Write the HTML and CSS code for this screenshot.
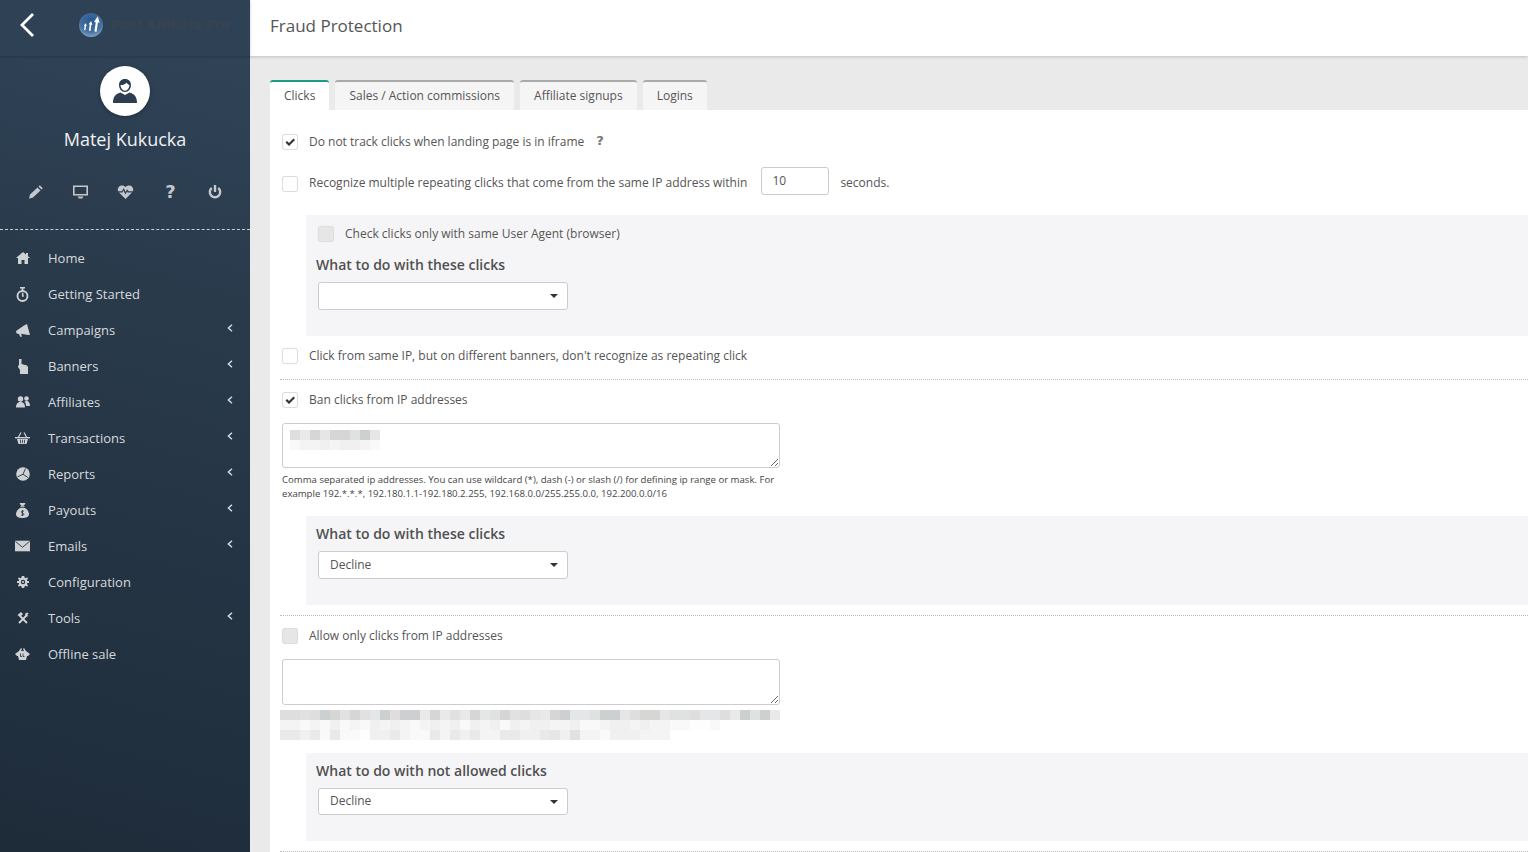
FILE: index.html
```html
<!DOCTYPE html>
<html lang="en">
<head>
<meta charset="utf-8">
<title>Fraud Protection</title>
<link rel="stylesheet" href="styles.css">
</head>
<body>
<div class="app">
  <aside class="sidebar">
    <div class="brand">
      <svg class="back" width="14" height="24" viewBox="0 0 14 24"><polyline points="13,1 2,12 13,23" fill="none" stroke="#fff" stroke-width="2.8"/></svg>
      <svg class="logo" width="24" height="24" viewBox="0 0 24 24">
        <defs><radialGradient id="lg" cx="0.5" cy="0.3" r="0.8"><stop offset="0" stop-color="#2c5a90"/><stop offset="0.6" stop-color="#44719f"/><stop offset="1" stop-color="#9ab8d2"/></radialGradient></defs>
        <circle cx="12" cy="12" r="12" fill="url(#lg)"/>
        <path transform="rotate(8 12 12)" d="M17.500 2.500l2.700 6h-1.700V18h-2.200V8.500H14.600zM11.500 8l1.800 3.600h-1V18h-1.600v-6.400h-1zM6.500 11l1.500 2.600h-.8V18H5.800v-4.400H5z" fill="#fff"/>
      </svg>
      <span class="brand-name">Post Affiliate Pro</span>
    </div>
    <div class="profile">
      <div class="avatar">
        <svg width="26" height="26" viewBox="0 0 26 26"><path d="M13 1c-3.800 0-6 2.600-6 6 0 3.700 2.500 7 6 7s6-3.300 6-7c0-3.400-2.200-6-6-6zm-4.500 6c2 .2 4.500-.6 6-2.300 1 1.300 2 2 3 2.300-.2 2.700-1.800 5.700-4.500 5.700S8.600 9.700 8.500 7zM8.500 14.500C5 15.800 1 17 1 25h24c0-8-4-9.200-7.500-10.500L13 17z" fill="#2c3e50"/></svg>
      </div>
      <div class="name">Matej Kukucka</div>
      <div class="quick">
        <svg width="16" height="16" viewBox="0 0 16 16"><path d="M10.500 3.500l3 3-7.500 7-4 1.200 1-4.200zM11.500 2.500l1.300-1.300 3 3-1.300 1.300z" fill="currentColor"/></svg>
        <svg width="17" height="16" viewBox="0 0 17 16"><path d="M1 1.500h15v10H1zm1.600 1.600v6.800h11.800V3.100zM5.500 12.500h6l-1.500 2H7z" fill="currentColor" fill-rule="evenodd"/></svg>
        <svg width="17" height="16" viewBox="0 0 17 16"><path d="M8.500 15L2 8.500h3.500l1-2 2 4 1.500-3 .7 1H15zM1.200 7.300C-.6 3.500 3.800-.6 8.500 3c4.700-3.600 9.100.5 7.300 4.300h-4.200l-1.500-2-1.400 2.800-2-4-1.700 3.200z" fill="currentColor"/></svg>
        <span class="q">?</span>
        <svg width="16" height="16" viewBox="0 0 16 16"><path d="M6.800 1h2.400v7H6.800z" fill="currentColor"/><path d="M4.800 4A5.200 5.200 0 1 0 11.200 4" fill="none" stroke="currentColor" stroke-width="2.400"/></svg>
      </div>
    </div>
    <nav class="menu">
      <a class="item"><span class="ico"><svg width="14" height="12" viewBox="0 0 14 12"><path d="M7 0l3 2.600V1h2v3.300L14 6h-2v6H8.500V8h-3v4H2V6H0z" fill="currentColor"/></svg></span><span class="txt">Home</span></a>
      <a class="item"><span class="ico"><svg width="13" height="15" viewBox="0 0 13 15"><path d="M4 0h5v1.500H7.400v2H5.600v-2H4z" fill="currentColor"/><circle cx="6.500" cy="9" r="5" fill="none" stroke="currentColor" stroke-width="1.900"/><path d="M5.800 5.800h1.400l.7 3.900H6z" fill="currentColor"/></svg></span><span class="txt">Getting Started</span></a>
      <a class="item"><span class="ico"><svg width="14" height="13" viewBox="0 0 14 13"><path d="M0 7l8-5.500L11 0l3 11-3.500-.2L5 9.800l1 3H4.200L3 10 .6 9.600z" fill="currentColor"/></svg></span><span class="txt">Campaigns</span><svg class="chev" width="6" height="8" viewBox="0 0 6 8"><polyline points="5,.7 1.400,4 5,7.300" fill="none" stroke="currentColor" stroke-width="1.500"/></svg></a>
      <a class="item"><span class="ico"><svg width="11" height="15" viewBox="0 0 11 15"><path d="M2 0h2.500v5L10 6.500 11 8v7H3v-4L1 8V6l1 1z" fill="currentColor"/></svg></span><span class="txt">Banners</span><svg class="chev" width="6" height="8" viewBox="0 0 6 8"><polyline points="5,.7 1.400,4 5,7.300" fill="none" stroke="currentColor" stroke-width="1.500"/></svg></a>
      <a class="item"><span class="ico"><svg width="14" height="12" viewBox="0 0 14 12"><circle cx="4.500" cy="3" r="2.700" fill="currentColor"/><circle cx="10.500" cy="2.500" r="2.300" fill="currentColor"/><path d="M0 11.500c0-4 2-5.500 4.500-5.500S9 7.500 9 11.500zM10 10c0-2-.5-3.300-1.500-4.300C9 5.300 9.700 5 10.500 5 13 5 14 7 14 10z" fill="currentColor"/></svg></span><span class="txt">Affiliates</span><svg class="chev" width="6" height="8" viewBox="0 0 6 8"><polyline points="5,.7 1.400,4 5,7.300" fill="none" stroke="currentColor" stroke-width="1.500"/></svg></a>
      <a class="item"><span class="ico"><svg width="15" height="12" viewBox="0 0 15 12"><path d="M0 5h15v1.400H0z" fill="currentColor"/><path d="M2 7h11l-1.500 5h-8zM5 7.800v3.400h.8V7.800zM7.100 7.800v3.400h.8V7.800zM9.200 7.800v3.400h.8V7.800z" fill="currentColor" fill-rule="evenodd"/><path d="M3.500 5L6 .5M11.500 5L9 .5" stroke="currentColor" stroke-width="1.200" fill="none"/></svg></span><span class="txt">Transactions</span><svg class="chev" width="6" height="8" viewBox="0 0 6 8"><polyline points="5,.7 1.400,4 5,7.300" fill="none" stroke="currentColor" stroke-width="1.500"/></svg></a>
      <a class="item"><span class="ico"><svg width="14" height="14" viewBox="0 0 14 14"><circle cx="7" cy="7" r="6.800" fill="currentColor"/><path d="M9.500 1.500L7 7.300M7 7.300L1.500 9.800M7 7.300l5 3.200" stroke="#25343f" stroke-width=".9" fill="none"/></svg></span><span class="txt">Reports</span><svg class="chev" width="6" height="8" viewBox="0 0 6 8"><polyline points="5,.7 1.400,4 5,7.300" fill="none" stroke="currentColor" stroke-width="1.500"/></svg></a>
      <a class="item"><span class="ico"><svg width="13" height="15" viewBox="0 0 13 15"><path d="M3.500 0h6L8 2.700H5zM4.500 3.200h4v1h-4zM4 5h5c2.500 1.500 4 4 4 6 0 3-3 4-6.500 4S0 14 0 11c0-2 1.500-4.500 4-6z" fill="currentColor"/><path d="M8 8.300C7 7.700 5.200 7.800 5.200 9s2.800 1 2.800 2.200-1.800 1.300-3 .7M6.500 7v6" stroke="#25343f" stroke-width=".8" fill="none"/></svg></span><span class="txt">Payouts</span><svg class="chev" width="6" height="8" viewBox="0 0 6 8"><polyline points="5,.7 1.400,4 5,7.300" fill="none" stroke="currentColor" stroke-width="1.500"/></svg></a>
      <a class="item"><span class="ico"><svg width="17" height="12" viewBox="0 0 17 12"><rect width="17" height="12" fill="currentColor"/><polyline points=".5,.8 8.500,7.500 16.500,.8" fill="none" stroke="#25343f" stroke-width="1"/></svg></span><span class="txt">Emails</span><svg class="chev" width="6" height="8" viewBox="0 0 6 8"><polyline points="5,.7 1.400,4 5,7.300" fill="none" stroke="currentColor" stroke-width="1.500"/></svg></a>
      <a class="item"><span class="ico"><svg width="12" height="12" viewBox="0 0 12 12"><path d="M4.800 0h2.400l.3 1.600 1.300.6L10.200 1.300 11 2.800 9.900 4l.2 1H12v2h-1.900l-.2 1 1.100 1.200-.8 1.500-1.400-.9-1.300.6L7.200 12H4.800l-.3-1.600-1.300-.6-1.400.9-.8-1.500L2.100 8l-.2-1H0V5h1.900l.2-1L1 2.800l.8-1.500 1.400.9 1.300-.6zM6 3.800a2.200 2.200 0 1 0 0 4.400 2.200 2.200 0 0 0 0-4.400z" fill="currentColor" fill-rule="evenodd"/><circle cx="6" cy="6" r="1.100" fill="currentColor"/></svg></span><span class="txt">Configuration</span></a>
      <a class="item"><span class="ico"><svg width="12" height="12" viewBox="0 0 12 12"><path d="M2 11L10 3M10 11L3 4" stroke="currentColor" stroke-width="1.900" fill="none"/><path d="M.5 3L4 0l2 2-3 3zM8 2a2.500 2.500 0 0 1 3.800-.8L10 3l1.500 1a2.500 2.500 0 0 1-3.500-2z" fill="currentColor"/></svg></span><span class="txt">Tools</span><svg class="chev" width="6" height="8" viewBox="0 0 6 8"><polyline points="5,.7 1.400,4 5,7.300" fill="none" stroke="currentColor" stroke-width="1.500"/></svg></a>
      <a class="item"><span class="ico"><svg width="15" height="12" viewBox="0 0 15 12"><path d="M0 6l4-3L6 0l1 1-1 2h3L8 1l1-1 2 3 4 3-2 2h-1l-1 4H4L3 8H2z" fill="currentColor"/><path d="M5.500 5.500v3h1.500M8 5.500v3h1.500" stroke="#25343f" stroke-width=".8" fill="none"/></svg></span><span class="txt">Offline sale</span></a>
    </nav>
  </aside>

  <div class="main">
    <header class="topbar"><h1 class="title">Fraud Protection</h1></header>
    <div class="content">
      <div class="tabs">
        <a class="tab active">Clicks</a>
        <a class="tab">Sales / Action commissions</a>
        <a class="tab">Affiliate signups</a>
        <a class="tab">Logins</a>
      </div>
      <section class="panel">
        <div class="check-row first">
          <span class="cb"><svg width="10" height="9" viewBox="0 0 10 9"><path d="M.5 4.500L2 3l2 2L8.500.5 10 2 4 8z" fill="#333"/></svg></span>
          <span class="lbl">Do not track clicks when landing page is in iframe</span>
          <span class="help">?</span>
        </div>
        <div class="check-row repeat">
          <span class="cb nudge"></span>
          <span class="lbl nudge-t">Recognize multiple repeating clicks that come from the same IP address within</span>
          <input class="num" type="text" value="10">
          <span class="lbl nudge-t">seconds.</span>
        </div>
        <div class="box box-a">
          <div class="check-row inner">
            <span class="cb off"></span>
            <span class="lbl">Check clicks only with same User Agent (browser)</span>
          </div>
          <h3 class="sub">What to do with these clicks</h3>
          <div class="select"><span class="val"></span><i class="caret"></i></div>
        </div>
        <div class="check-row gap12">
          <span class="cb"></span>
          <span class="lbl">Click from same IP, but on different banners, don't recognize as repeating click</span>
        </div>
        <hr class="rule r1">
        <div class="check-row gap12">
          <span class="cb"><svg width="10" height="9" viewBox="0 0 10 9"><path d="M.5 4.500L2 3l2 2L8.500.5 10 2 4 8z" fill="#333"/></svg></span>
          <span class="lbl">Ban clicks from IP addresses</span>
        </div>
        <div class="ta-wrap">
          <textarea class="ta"></textarea>
          <div class="smudge">
            <div class="px-row"><i class="t3"></i><i class="t6"></i><i class="t2"></i><i class="t5"></i><i class="t2"></i><i class="t2"></i><i class="t4"></i><i class="t1"></i><i class="t5"></i></div>
            <div class="px-row"><i class="t9"></i><i class="t8"></i><i class="t8"></i><i class="t7"></i><i class="t8"></i><i class="t7"></i><i class="t7"></i><i class="t8"></i><i class="t9"></i></div>
          </div>
        </div>
        <p class="hint">Comma separated ip addresses. You can use wildcard (*), dash (-) or slash (/) for defining ip range or mask. For example 192.*.*.*, 192.180.1.1-192.180.2.255, 192.168.0.0/255.255.0.0, 192.200.0.0/16</p>
        <div class="box box-b">
          <h3 class="sub first-sub">What to do with these clicks</h3>
          <div class="select"><span class="val">Decline</span><i class="caret"></i></div>
        </div>
        <hr class="rule r2">
        <div class="check-row gap12">
          <span class="cb off"></span>
          <span class="lbl">Allow only clicks from IP addresses</span>
        </div>
        <div class="ta-wrap">
          <textarea class="ta tall"></textarea>
        </div>
        <div class="blurred">
          <div class="px-row"><i class="t3"></i><i class="t3"></i><i class="t4"></i><i class="t3"></i><i class="t1"></i><i class="t2"></i><i class="t4"></i><i class="t2"></i><i class="t4"></i><i class="t5"></i><i class="t1"></i><i class="t3"></i><i class="t1"></i><i class="t1"></i><i class="t6"></i><i class="t2"></i><i class="t6"></i><i class="t4"></i><i class="t6"></i><i class="t2"></i><i class="t5"></i><i class="t4"></i><i class="t2"></i><i class="t4"></i><i class="t3"></i><i class="t5"></i><i class="t6"></i><i class="t2"></i><i class="t1"></i><i class="t5"></i><i class="t5"></i><i class="t4"></i><i class="t1"></i><i class="t1"></i><i class="t5"></i><i class="t3"></i><i class="t2"></i><i class="t2"></i><i class="t5"></i><i class="t4"></i><i class="t4"></i><i class="t3"></i><i class="t5"></i><i class="t5"></i><i class="t3"></i><i class="t6"></i><i class="t1"></i><i class="t4"></i><i class="t1"></i><i class="t6"></i></div>
          <div class="px-row"><i class="t8"></i><i class="t8"></i><i class="t9"></i><i class="t8"></i><i class="t9"></i><i class="t7"></i><i class="t9"></i><i class="t8"></i><i class="t9"></i><i class="t7"></i><i class="t8"></i><i class="t7"></i><i class="t8"></i><i class="t9"></i><i class="t8"></i><i class="t7"></i><i class="t8"></i><i class="t7"></i><i class="t9"></i><i class="t7"></i><i class="t8"></i><i class="t7"></i><i class="t9"></i><i class="t7"></i><i class="t8"></i><i class="t7"></i><i class="t7"></i><i class="t8"></i><i class="t8"></i><i class="t7"></i><i class="t9"></i><i class="t9"></i><i class="t8"></i><i class="t7"></i><i class="t7"></i><i class="t8"></i><i class="t7"></i><i class="t8"></i><i class="t8"></i><i class="t9"></i><i class="t9"></i><i class="t10"></i><i class="t10"></i><i class="t9"></i></div>
          <div class="px-row"><i class="t6"></i><i class="t6"></i><i class="t7"></i><i class="t6"></i><i class="t9"></i><i class="t6"></i><i class="t9"></i><i class="t9"></i><i class="t10"></i><i class="t7"></i><i class="t7"></i><i class="t6"></i><i class="t8"></i><i class="t9"></i><i class="t9"></i><i class="t6"></i><i class="t8"></i><i class="t6"></i><i class="t7"></i><i class="t6"></i><i class="t8"></i><i class="t8"></i><i class="t6"></i><i class="t6"></i><i class="t7"></i><i class="t7"></i><i class="t6"></i><i class="t5"></i><i class="t7"></i><i class="t4"></i><i class="t8"></i><i class="t8"></i><i class="t9"></i><i class="t7"></i><i class="t7"></i><i class="t7"></i><i class="t8"></i><i class="t8"></i><i class="t8"></i></div>
        </div>
        <div class="box box-c">
          <h3 class="sub first-sub">What to do with not allowed clicks</h3>
          <div class="select short"><span class="val">Decline</span><i class="caret"></i></div>
        </div>
        <hr class="rule r3">
      </section>
    </div>
  </div>
</div>
</body>
</html>
```

FILE: styles.css
```css
* { box-sizing: border-box; }
html, body { margin: 0; height: 100%; overflow: hidden; }
body { font-family: "Open Sans", "Liberation Sans", sans-serif; color: #555; background: #eaeaea; }

.app { display: flex; height: 852px; overflow: hidden; }

/* Sidebar */
.sidebar {
  width: 250px; flex: none; color: #d6d9dc;
  background: linear-gradient(195deg, #31455a 0%, #293a4b 35%, #1e2c3a 100%);
}
.brand {
  height: 56px; display: flex; align-items: center; padding: 0 0 7px 20px;
  background: #2f4255; box-shadow: 0 1px 3px rgba(0,0,0,.2); position: relative;
}
.logo { margin-left: 45px; }
.brand-name {
  margin-left: 8px; font: italic 700 12.5px "DejaVu Sans", sans-serif; color: #39434f; white-space: nowrap;
}
.profile { display: flex; flex-direction: column; align-items: center; padding-top: 10px; height: 174px; border-bottom: 1px dashed #c9ced3; }
.avatar {
  width: 50px; height: 50px; border-radius: 50%; background: #fff; display: flex; align-items: center; justify-content: center;
  box-shadow: 0 1px 4px rgba(0,0,0,.3);
}
.name { margin-top: 10px; font-size: 18px; line-height: 26px; color: #f0f1f2; }
.quick { margin-top: 32px; width: 196px; display: flex; justify-content: space-between; align-items: center; height: 16px; color: #c4c7cb; }
.q { font: 700 18px/16px "DejaVu Sans", sans-serif; width: 16px; text-align: center; }
.menu { padding-top: 10px; }
.item { display: flex; align-items: center; height: 36px; padding: 0 17px 0 15px; font-size: 13px; color: #d6d9dc; }
.ico { width: 15px; margin-right: 18px; display: flex; justify-content: center; flex: none; color: #cfd2d5; }
.txt { white-space: nowrap; }
.chev { margin-left: auto; margin-bottom: 4px; color: #d6d9dc; }

/* Main */
.main { flex: 1; min-width: 0; display: flex; flex-direction: column; }
.topbar { height: 56px; flex: none; background: #fff; padding-left: 20px; display: flex; align-items: center; box-shadow: 0 1px 3px rgba(0,0,0,.18); }
.title { margin: 0 0 6px; font-size: 17px; font-weight: 400; color: #555; }
.content { flex: 1; padding: 24px 0 0 20px; }
.tabs { display: flex; gap: 6px; height: 30px; }
.tab {
  display: flex; align-items: center; padding: 0 14px 1px; font-size: 12px; color: #555;
  background: #f5f5f5; border-top: 2px solid #aaa; border-radius: 3px 3px 0 0;
}
.tab.active { background: #fff; border-top-color: #1a9c85; }
.panel { background: #fff; padding: 24px 0 0 10px; height: 742px; }

.check-row { display: flex; align-items: center; padding-left: 2px; }
.first .help { margin-left: 12px; margin-top: -3px; font: 700 13px "DejaVu Sans", sans-serif; color: #777; }
.cb {
  width: 16px; height: 16px; flex: none; border: 1px solid #ddd; border-radius: 3px; background: #fff;
  display: flex; align-items: center; justify-content: center; box-shadow: 0 0 1px rgba(0,0,0,.08);
}
.cb.off { background: #e6e6e6; }
.lbl { margin-left: 11px; font-size: 12px; line-height: 16px; color: #555; white-space: nowrap; }
.repeat { margin-top: 17px; height: 28px; }
.nudge { margin-top: 5px; }
.nudge-t { margin-top: 4px; }
.num {
  width: 68px; height: 28px; margin-left: 14px; padding: 0 10px 2px; border: 1px solid #ccc; border-radius: 3px;
  font: 12px "Open Sans", sans-serif; color: #555; background: #fff;
}
.box { margin-left: 26px; padding-left: 10px; background: #f5f5f7; }
.box-a { margin-top: 20px; padding-top: 11px; padding-bottom: 26px; }
.box-b { margin-top: 15px; padding-top: 8px; padding-bottom: 26px; }
.box-c { margin-top: 13px; padding-top: 8px; padding-bottom: 26px; }
.sub { margin: 13px 0 7px; font-size: 14px; line-height: 20px; font-weight: 600; color: #505050; }
.first-sub { margin-top: 0; }
.select {
  margin-left: 2px; width: 250px; height: 28px; border: 1px solid #ccc; border-radius: 3px; background: #fff;
  display: flex; align-items: center; justify-content: space-between; padding: 0 9px 0 11px;
}
.select.short { height: 27px; }
.val { font-size: 12px; color: #555; margin-bottom: 2px; }
.caret { width: 0; height: 0; border-left: 4px solid transparent; border-right: 4px solid transparent; border-top: 4px solid #333; }
.gap12 { margin-top: 12px; }
.rule { border: 0; border-top: 1px dotted #bbb; margin: 0; }
.r1 { margin-top: 15px; }
.r2 { margin-top: 10px; }
.r3 { margin-top: 10px; }
.ta-wrap { position: relative; margin: 15px 0 0 2px; width: 498px; height: 45px; }
.ta-wrap:has(.tall) { height: 46px; }
.ta { display: block; width: 498px; height: 45px; border: 1px solid #ccc; border-radius: 3px; background: #fff; resize: vertical; padding: 6px; outline: 0; }
.ta.tall { height: 46px; }
.smudge { position: absolute; left: 8px; top: 7px; pointer-events: none; }
.hint { margin: 5px 0 0 2px; width: 500px; font-size: 9.6px; line-height: 14px; color: #444; }
.blurred { margin-top: 5px; width: 500px; }
.px-row { display: flex; height: 10px; }
.px-row i { width: 10px; height: 10px; flex: none; }
.t1 { background: #ccd0d0; }
.t2 { background: #d6d6d4; }
.t3 { background: #dedede; }
.t4 { background: #e0e2e2; }
.t5 { background: #e4e6e8; }
.t6 { background: #e9e9e9; }
.t7 { background: #f0f0f0; }
.t8 { background: #f4f4f4; }
.t9 { background: #f9f9f9; }
.t10 { background: #fdfdfd; }
```
